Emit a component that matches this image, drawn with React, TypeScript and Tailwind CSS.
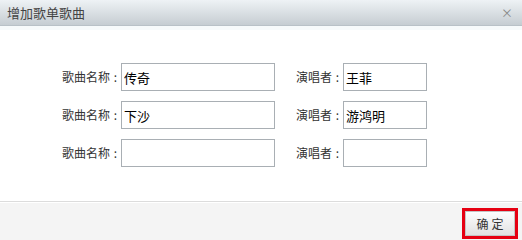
const font = { fontFamily: '"Noto Sans CJK SC", "Noto Sans", sans-serif' }

const rows = [
  { song: '传奇', singer: '王菲' },
  { song: '下沙', singer: '游鸿明' },
  { song: '', singer: '' },
]

function Label({ text, className }: { text: string; className: string }) {
  return (
    <span className={`flex whitespace-nowrap ${className}`}>
      {text}
      <span className="w-[12px] text-center">:</span>
    </span>
  )
}

export default function App() {
  return (
    <div className="flex h-[240px] w-[522px] flex-col overflow-hidden bg-white text-[12px] text-[#333]" style={font}>
      <div className="flex h-[26px] items-center justify-between border-b border-[#b9c1c7] bg-gradient-to-b from-[#eef2f5] to-[#c6cdd2] pl-[7px] pr-[9px]">
        <span className="text-[13px] text-[#444]">增加歌单歌曲</span>
        <span className="text-[12px] leading-none text-[#888]">×</span>
      </div>
      <div className="h-[4px] bg-[#f7fafb]" />
      <div className="flex flex-1 flex-col gap-[10px] pl-[62px] pt-[33px]">
        {rows.map((r, i) => (
          <div key={i} className="flex items-center">
            <Label text="歌曲名称" className="w-[59px]" />
            <input
              readOnly
              value={r.song}
              className="h-[28px] w-[154px] border border-[#a9afb4] bg-white px-[2px] text-[13px] text-black outline-none"
              style={font}
            />
            <Label text="演唱者" className="ml-[21px] w-[47px]" />
            <input
              readOnly
              value={r.singer}
              className="h-[28px] w-[84px] border border-[#a9afb4] bg-white px-[2px] text-[13px] text-black outline-none"
              style={font}
            />
          </div>
        ))}
      </div>
      <div className="flex h-[39px] justify-end border-t border-[#dcdcdc] bg-[#f4f4f4] pr-[4px] pt-[6px] shadow-[inset_0_1px_0_#fff]">
        <div className="h-[31px] w-[56px] border-[3px] border-[#e60012]">
          <button className="flex h-full w-full items-center justify-center border border-[#c4c4c4] bg-gradient-to-b from-[#fdfdfd] to-[#e2e2e2] pl-[3px] text-[12px] tracking-[3px] text-[#333]">
            确定
          </button>
        </div>
      </div>
    </div>
  )
}
